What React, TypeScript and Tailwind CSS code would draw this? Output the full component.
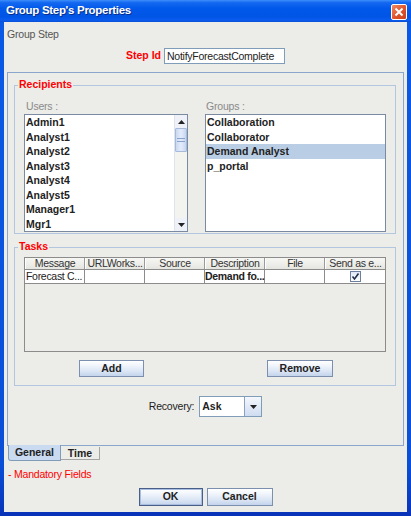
import React from "react";

const users = ["Admin1", "Analyst1", "Analyst2", "Analyst3", "Analyst4", "Analyst5", "Manager1", "Mgr1"];
const groups = ["Collaboration", "Collaborator", "Demand Analyst", "p_portal"];
const cols = ["Message", "URLWorks...", "Source", "Description", "File", "Send as e..."];

function Btn({ children, w, def }: { children: React.ReactNode; w: string; def?: boolean }) {
  return (
    <div
      className={`${w} h-full flex items-center justify-center font-bold text-[#222] border ${
        def ? "border-[#4a5f88] shadow-[inset_0_0_0_1px_#a9bde0]" : "border-[#7d8fae]"
      } bg-[linear-gradient(to_bottom,#ffffff_0%,#eef3fb_35%,#d6e2f3_75%,#c3d4ec_100%)]`}
    >
      {children}
    </div>
  );
}

function Check() {
  return (
    <div className="w-[11px] h-[11px] border border-[#6d7f9e] bg-[linear-gradient(to_bottom,#dfe8f5,#ffffff)] flex items-center justify-center">
      <svg width="9" height="9" viewBox="0 0 9 9">
        <path d="M1.5 4.5 L3.5 7 L7.5 1.5" stroke="#21304a" strokeWidth="1.6" fill="none" />
      </svg>
    </div>
  );
}

export default function App() {
  return (
    <div className="w-[411px] h-[516px] flex flex-col bg-[linear-gradient(to_bottom,#0a5ae6,#0a4fd8_90%,#0933b8)] font-['Liberation_Sans',Arial,sans-serif] text-[10.5px] text-[#222] overflow-hidden">
      {/* Title bar */}
      <div className="h-[22px] flex items-center justify-between pl-[6px] pr-[4px] bg-[linear-gradient(to_bottom,#3d8ef9_0%,#1468f0_12%,#0058ea_40%,#0055e5_75%,#0a5cee_92%,#0b4ed4_100%)]">
        <span className="text-white font-bold text-[11.5px] tracking-[-0.3px] [text-shadow:1px_1px_0_#0a2d8a]">
          Group Step's Properties
        </span>
        <div className="w-[16px] h-[16px] mt-[2px] rounded-[2px] border border-white bg-[linear-gradient(135deg,#f08a62,#e0532a_55%,#c8441e)] flex items-center justify-center">
          <svg width="10" height="10" viewBox="0 0 10 10">
            <path d="M1.5 1.5 L8.5 8.5 M8.5 1.5 L1.5 8.5" stroke="#fff" strokeWidth="2" />
          </svg>
        </div>
      </div>

      {/* Body */}
      <div className="flex-1 mx-[4px] mb-[4px] bg-[#ecece8] flex flex-col">
        <div className="mt-[6px] ml-[3px] h-[12px] leading-[12px] text-[#555] tracking-[-0.2px]">Group Step</div>

        <div className="mt-[8px] h-[16px] flex items-center justify-center gap-[3px]">
          <span className="font-bold text-[#f00]">Step Id</span>
          <div className="w-[121px] h-[16px] border border-[#7f9db9] bg-white pl-[2px] leading-[14px] text-[#222] tracking-[-0.25px]">
            NotifyForecastComplete
          </div>
        </div>

        {/* Tab panel */}
        <div className="mt-[8px] mx-[3px] h-[374px] border border-[#8aa6cc] flex flex-col">
          {/* Recipients */}
          <div className="relative mt-[12px] ml-[6px] mr-[7px] h-[149px] border border-[#b2c6df] pt-[13px] pl-[9px] flex">
            <span className="absolute top-[-8px] left-[3px] px-[1px] bg-[#ecece8] font-bold text-[#f00] leading-[13px]">
              Recipients
            </span>
            <div className="w-[164px] flex flex-col">
              <div className="h-[14px] leading-[14px] pl-[2px] text-[#8a8a8a] tracking-[-0.2px]">Users :</div>
              <div className="mt-[1px] h-[118px] border border-[#7a8aa0] bg-white flex">
                <div className="flex-1 flex flex-col font-bold">
                  {users.map((u) => (
                    <div key={u} className="h-[14.5px] leading-[14.5px] pl-[1px]">
                      {u}
                    </div>
                  ))}
                </div>
                <div className="w-[13px] border-l border-[#dfe3ea] bg-[#f3f3ef] flex flex-col">
                  <div className="h-[13px] flex items-center justify-center bg-[#eef2f8]">
                    <svg width="7" height="4" viewBox="0 0 7 4">
                      <path d="M0 4 L3.5 0 L7 4 Z" fill="#222" />
                    </svg>
                  </div>
                  <div className="h-[24px] border border-[#a6badb] rounded-[1px] bg-[linear-gradient(to_right,#c9d8f2,#e4ecfa_50%,#c6d6f1)] flex flex-col items-center justify-center gap-[2px]">
                    <div className="w-[8px] h-[1px] bg-[#8aa2cc]" />
                    <div className="w-[8px] h-[1px] bg-[#8aa2cc]" />
                  </div>
                  <div className="flex-1" />
                  <div className="h-[13px] flex items-center justify-center bg-[#eef2f8]">
                    <svg width="7" height="4" viewBox="0 0 7 4">
                      <path d="M0 0 L3.5 4 L7 0 Z" fill="#222" />
                    </svg>
                  </div>
                </div>
              </div>
            </div>
            <div className="ml-[17px] w-[181px] flex flex-col">
              <div className="h-[14px] leading-[14px] pl-[1px] text-[#8a8a8a] tracking-[-0.2px]">Groups :</div>
              <div className="mt-[1px] h-[118px] border border-[#7a8aa0] bg-white flex flex-col font-bold">
                {groups.map((g) => (
                  <div
                    key={g}
                    className={`h-[14.5px] leading-[14.5px] pl-[1px] ${g === "Demand Analyst" ? "bg-[#b9cee5]" : ""}`}
                  >
                    {g}
                  </div>
                ))}
              </div>
            </div>
          </div>

          {/* Tasks */}
          <div className="relative mt-[13px] ml-[6px] mr-[7px] h-[139px] border border-[#b2c6df] pt-[9px] pl-[9px] flex flex-col">
            <span className="absolute top-[-8px] left-[3px] px-[1px] bg-[#ecece8] font-bold text-[#f00] leading-[13px]">
              Tasks
            </span>
            <div className="w-[362px] h-[95px] border border-[#8c8c8c] flex flex-col">
              <div className="h-[12px] flex border-b border-[#8c8c8c] bg-[linear-gradient(to_bottom,#f6f6f3,#e6e6e1)]">
                {cols.map((c, i) => (
                  <div
                    key={c}
                    className={`${i === 5 ? "flex-1" : "w-[60px]"} h-full leading-[11px] text-center text-[#333] tracking-[-0.3px] border-l border-white ${
                      i < 5 ? "border-r border-r-[#9a9a9a]" : ""
                    } whitespace-nowrap`}
                  >
                    {c}
                  </div>
                ))}
              </div>
              <div className="h-[14px] flex border-b border-[#8c8c8c] bg-white">
                <div className="w-[60px] h-full leading-[13px] pl-[1px] border-r border-[#8c8c8c] whitespace-nowrap tracking-[-0.3px]">Forecast C...</div>
                <div className="w-[60px] h-full border-r border-[#8c8c8c]" />
                <div className="w-[60px] h-full border-r border-[#8c8c8c]" />
                <div className="w-[60px] h-full leading-[13px] text-center font-bold border-r border-[#8c8c8c] whitespace-nowrap tracking-[-0.3px]">Demand fo...</div>
                <div className="w-[60px] h-full border-r border-[#8c8c8c]" />
                <div className="flex-1 h-full flex items-center justify-center">
                  <Check />
                </div>
              </div>
              <div className="flex-1" />
            </div>
            <div className="mt-[8px] h-[17px] flex">
              <div className="ml-[55px] h-full">
                <Btn w="w-[65px]">Add</Btn>
              </div>
              <div className="ml-[123px] h-full">
                <Btn w="w-[66px]">Remove</Btn>
              </div>
            </div>
          </div>

          {/* Recovery */}
          <div className="mt-[10px] h-[21px] flex items-center justify-center gap-[5px]">
            <span className="text-[#222] tracking-[-0.2px]">Recovery:</span>
            <div className="w-[63px] h-[21px] flex border border-[#7f9db9] bg-white">
              <div className="flex-1 font-bold leading-[19px] pl-[2px]">Ask</div>
              <div className="w-[17px] h-full border-l border-[#8aa0c4] bg-[linear-gradient(to_bottom,#f4f7fc,#cfdcf0)] flex items-center justify-center">
                <svg width="7" height="4" viewBox="0 0 7 4">
                  <path d="M0 0 L3.5 4 L7 0 Z" fill="#222" />
                </svg>
              </div>
            </div>
          </div>
        </div>

        {/* Tabs */}
        <div className="h-[15px] flex ml-[4px]">
          <div className="-mt-[1px] w-[53px] h-[16px] bg-[#c9daf1] border-l border-b border-r border-[#7f9db9] rounded-bl-[3px] font-bold text-[#222] leading-[15px] text-center">
            General
          </div>
          <div className="mt-[1px] w-[39px] h-[13px] bg-[#ecece8] border-r border-b border-[#a5a5a5] font-bold text-[#222] leading-[12px] text-center">
            Time
          </div>
        </div>

        <div className="mt-[7px] ml-[4px] h-[12px] leading-[12px] text-[#f00] tracking-[-0.2px]">- Mandatory Fields</div>

        <div className="mt-[8px] h-[18px] flex justify-center gap-[4px]">
          <Btn w="w-[64px]" def>
            OK
          </Btn>
          <Btn w="w-[66px]">Cancel</Btn>
        </div>
      </div>
    </div>
  );
}
